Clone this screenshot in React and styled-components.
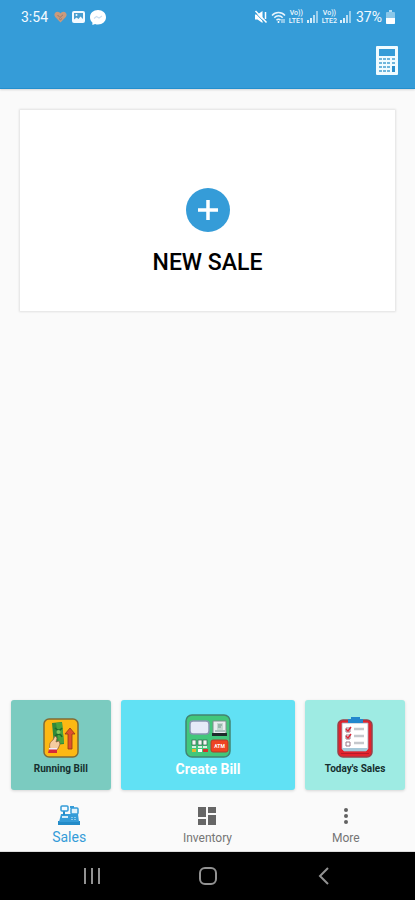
import React, { useState } from 'react';
import styled, { createGlobalStyle } from 'styled-components';

const GlobalStyle = createGlobalStyle`
  * {
    box-sizing: border-box;
  }

  body {
    margin: 0;
    background: #fafafa;
    font-family: Roboto, 'Liberation Sans', sans-serif;
  }

  button {
    font-family: inherit;
    border: 0;
    padding: 0;
    cursor: pointer;
  }

  svg {
    display: block;
    flex: none;
  }
`;

const HeartIcon = () => (
  <svg width="13" height="12" viewBox="0 0 13 12">
    <path d="M6.5 11.5 1.2 6C-.6 3.8.8.8 3.4.8c1.4 0 2.4.7 3.1 1.8C7.2 1.5 8.2.8 9.6.8c2.6 0 4 3 2.2 5.2Z" fill="#c99a7c" />
    <path d="M3.5 4 6 6.5 9 3.8M5 7.5l1.5 1.2L8 7.5" fill="none" stroke="#96796c" />
  </svg>
);

const PictureIcon = () => (
  <svg width="13" height="12" viewBox="0 0 13 12">
    <rect width="13" height="12" rx="2" fill="#f3faff" />
    <path d="M2 2h9v6L8.5 5.5 6.5 8 4.5 6.5 2 8.5Z" fill="#4b9fd0" />
    <circle cx="4.5" cy="4" r="1" fill="#f3faff" />
  </svg>
);

const ChatIcon = () => (
  <svg width="16" height="15" viewBox="0 0 16 15">
    <path d="M8 0c4.5 0 8 3 8 7.2s-3.5 7.2-8 7.2c-1 0-2-.1-2.9-.5L2.4 15v-2.6C.9 11.2 0 9.4 0 7.2 0 3 3.5 0 8 0Z" fill="#fff" />
    <path d="m4 8.5 2.5-2L9 8l3-2" fill="none" stroke="#c9def0" strokeWidth="1.2" />
  </svg>
);

const MuteIcon = () => (
  <svg width="14" height="14" viewBox="0 0 14 14">
    <path d="M1 4.5h2.5L8.500 1v12l-5-3.500H1Z" fill="#fff" />
    <path d="M1 2.500 11 13" stroke="#359cd8" />
    <path d="m1.500 1 11 11.500M11.500 2v7" stroke="#fff" strokeWidth="1.5" fill="none" />
  </svg>
);

const WifiIcon = () => (
  <svg width="15" height="13" viewBox="0 0 15 13" fill="none" stroke="#e8f5fd" strokeWidth="1.5">
    <path d="M1 4.5C4.5.6 10.5.6 14 4.5M3.3 6.8c2.4-2.6 6-2.6 8.4 0M5.5 9.2c1.2-1.3 2.8-1.3 4 0" />
    <circle cx="7.5" cy="11" r="1" fill="#fff" stroke="none" />
    <path d="M11 8v4M13 8v4" strokeWidth="1" />
  </svg>
);

const SignalIcon = () => (
  <svg width="12" height="12" viewBox="0 0 12 12" fill="#d9eefa">
    <rect x="0" y="9" width="2" height="3" />
    <rect x="3" y="7" width="2" height="5" />
    <rect x="6" y="4" width="2" height="8" opacity=".8" />
    <rect x="9" y="0" width="2" height="12" opacity=".6" />
  </svg>
);

const BatteryIcon = () => (
  <svg width="9" height="14" viewBox="0 0 9 14">
    <rect x="3" y="0" width="3" height="2" fill="#b5dcf3" />
    <rect x="0" y="2" width="9" height="12" rx="1" fill="#8ac7e9" />
    <path d="M0 8h9v5a1 1 0 0 1-1 1H1a1 1 0 0 1-1-1Z" fill="#fff" />
  </svg>
);

const CalculatorIcon = () => (
  <svg width="22" height="29" viewBox="0 0 22 29">
    <rect width="22" height="29" rx="1" fill="#f0fbff" />
    <rect x="3" y="3" width="16" height="7" fill="#359cd8" />
    {[12, 16, 20, 24].map((y) =>
      [3, 7, 11, 16].map((x) => (
        <rect key={`${x}-${y}`} x={x} y={y} width="3" height="2" fill="#6fb6dc" />
      ))
    )}
    <rect x="16" y="20" width="3" height="6" fill="#2b8fcb" />
  </svg>
);

const PlusIcon = () => (
  <svg width="44" height="44" viewBox="0 0 44 44">
    <circle cx="22" cy="22" r="22" fill="#359cd8" />
    <path d="M22 12v20M12 22h20" stroke="#fff" strokeWidth="3.5" />
  </svg>
);

const RunningBillIcon = () => (
  <svg width="36" height="40" viewBox="0 0 36 40">
    <rect x="1" y="1" width="34" height="38" rx="5" fill="#fdb813" stroke="#806b36" strokeWidth="1.5" />
    <path d="M9 5 19 4l2 22-10 1Z" fill="#31893b" />
    <path d="m13 5 6-.5L21 25l-5 .5Z" fill="#4aa33f" />
    <path d="M12 10c3 3 5 3 7 0M12 18c3-3 6-2 7 1" fill="none" stroke="#1d6b2d" strokeWidth="1.5" />
    <circle cx="15.5" cy="14" r="2" fill="#83c65c" />
    <path d="M7 31c-1-5 0-7 3-9l2-4 2 2-1 4 3-1 1 3-2 5-2 1Z" fill="#f5cba0" stroke="#8a5a3a" strokeWidth=".7" />
    <path d="M6 31h8v4H5Z" fill="#d6293a" />
    <path d="M6 30h8v1.5H6Z" fill="#eef" />
    <path d="M25 31V16h-3l5-6 5 6h-3v15Z" fill="#e2502b" stroke="#8d3b17" strokeWidth=".8" />
  </svg>
);

const CreateBillIcon = () => (
  <svg width="46" height="44" viewBox="0 0 46 44">
    <rect x="1" y="1" width="44" height="42" rx="6" fill="#42c77b" stroke="#428471" strokeWidth="1.5" />
    <rect x="5" y="7" width="19" height="13" rx="3" fill="#e6eaf8" stroke="#8795b0" strokeWidth="1.5" />
    <path d="M28 7h13v13H28Z" fill="#e9edf0" stroke="#7c8d8b" />
    <path d="M32 9h6v7h-6Z" fill="#c3d8d0" />
    <path d="M33 11h4M33 13h3M30 17h10" stroke="#6d9189" />
    <path d="M27 19h15v3H27Z" fill="#1e2c2b" />
    {[7, 13, 18].map((x) => (
      <g key={x}>
        <rect x={x} y="26" width="4" height="5" fill="#f4f7f4" stroke="#315f4b" strokeWidth=".7" />
        <rect x={x} y="32" width="4" height="2" fill="#dceee2" />
      </g>
    ))}
    <path d="M7 35h4v3H7Z" fill="#e5b82b" />
    <path d="M13 35h4v3h-4Z" fill="#fff" />
    <path d="M18 35h5v3h-5Z" fill="#d4342c" />
    <rect x="26" y="26" width="17" height="12" rx="2" fill="#ee4423" stroke="#af3d2a" />
    <text x="34.5" y="34" fontSize="5" fontWeight="700" fill="#fff" textAnchor="middle">ATM</text>
  </svg>
);

const TodaySalesIcon = () => (
  <svg width="36" height="41" viewBox="0 0 36 41">
    <rect x="1" y="3" width="34" height="37" rx="5" fill="#e3222d" stroke="#98414a" strokeWidth="1.5" />
    <path d="M4 36h28v1H4Z" fill="#b71928" />
    <path d="M5 6h26v26l-2 2H7l-2-2Z" fill="#fff" stroke="#9caab9" strokeWidth=".8" />
    <path d="M5 31h26l-2 3H7Z" fill="#a6c8d8" />
    <path d="M11 2h3V0h9v2h3v4H11Z" fill="#2387cd" />
    <path d="M9 11h4v4H9ZM9 18h4v4H9ZM9 25h4v4H9Z" fill="none" stroke="#997986" />
    <path d="m9 12 2 2 3-4M9 19l2 2 3-4" fill="none" stroke="#d82838" strokeWidth="1.5" />
    <path d="M17 12h10M17 19h10M17 26h10" stroke="#c5c8cc" strokeWidth="2.5" />
  </svg>
);

const SalesIcon = () => (
  <svg width="24" height="20" viewBox="0 0 24 20">
    <path d="M1 16h22v4H1Z" fill="#238bc8" />
    <path d="M4 9h17l1 8H2Z" fill="#359cd8" />
    <path d="M7 5v5" stroke="#238bc8" strokeWidth="2" />
    <rect x="4" y="1" width="7" height="5" rx="1" fill="#f3faff" stroke="#359cd8" strokeWidth="1.5" />
    <rect x="14" y="3" width="7" height="6" rx="1" fill="#e1f2fb" stroke="#359cd8" strokeWidth="1.5" />
    <path d="M13 1h4v2h-4Z" fill="#359cd8" />
    <path d="M5 11h6v2H5Z" fill="#d6edf9" />
    <path d="M14 12h2v1h-2ZM17 12h2v1h-2ZM14 14h2v1h-2ZM17 14h2v1h-2Z" fill="#8bc8e9" />
  </svg>
);

const InventoryIcon = () => (
  <svg width="20" height="20" viewBox="0 0 20 20" fill="#666">
    <path d="M1 1h8v10H1ZM11 1h8v6h-8ZM1 13h8v6H1ZM11 9h8v10h-8Z" />
  </svg>
);

const MoreIcon = () => (
  <svg width="20" height="20" viewBox="0 0 20 20" fill="#616161">
    <circle cx="10" cy="4" r="2" />
    <circle cx="10" cy="10" r="2" />
    <circle cx="10" cy="16" r="2" />
  </svg>
);

const tiles = [
  { label: 'Running Bill', icon: <RunningBillIcon />, color: '#7bcbc0' },
  { label: 'Create Bill', icon: <CreateBillIcon />, color: '#61e1f4', primary: true },
  { label: "Today's Sales", icon: <TodaySalesIcon />, color: '#9eebe3' },
];

const tabs = [
  { label: 'Sales', icon: <SalesIcon /> },
  { label: 'Inventory', icon: <InventoryIcon /> },
  { label: 'More', icon: <MoreIcon /> },
];

const App = () => {
  const [activeTab, setActiveTab] = useState('Sales');

  return (
    <Screen>
      <GlobalStyle />

      <Header>
        <StatusBar>
          <StatusGroup $gap={5}>
            <StatusText>3:54</StatusText>
            <HeartIcon />
            <PictureIcon />
            <ChatIcon />
          </StatusGroup>
          <StatusGroup $gap={3}>
            <MuteIcon />
            <WifiIcon />
            <Volte><span>Vo))</span><span>LTE1</span></Volte>
            <SignalIcon />
            <Volte><span>Vo))</span><span>LTE2</span></Volte>
            <SignalIcon />
            <StatusText>37%</StatusText>
            <BatteryIcon />
          </StatusGroup>
        </StatusBar>
        <Toolbar>
          <IconButton type="button" aria-label="Calculator">
            <CalculatorIcon />
          </IconButton>
        </Toolbar>
      </Header>

      <Content>
        <NewSaleCard type="button">
          <PlusIcon />
          NEW SALE
        </NewSaleCard>
      </Content>

      <Tiles>
        {tiles.map((tile) => (
          <Tile key={tile.label} type="button" $color={tile.color} $primary={tile.primary}>
            {tile.icon}
            <span>{tile.label}</span>
          </Tile>
        ))}
      </Tiles>

      <TabBar>
        {tabs.map((tab) => (
          <Tab
            key={tab.label}
            type="button"
            $active={tab.label === activeTab}
            onClick={() => setActiveTab(tab.label)}
          >
            {tab.icon}
            <span>{tab.label}</span>
          </Tab>
        ))}
      </TabBar>

      <SystemBar>
        <SystemButton type="button" aria-label="Recents">
          <svg width="18" height="18" viewBox="0 0 18 18">
            <path d="M2 1v16M9 1v16M16 1v16" />
          </svg>
        </SystemButton>
        <SystemButton type="button" aria-label="Home">
          <svg width="18" height="18" viewBox="0 0 18 18">
            <rect x="1" y="1" width="16" height="16" rx="5" />
          </svg>
        </SystemButton>
        <SystemButton type="button" aria-label="Back">
          <svg width="18" height="18" viewBox="0 0 18 18">
            <path d="M13 1 5 9l8 8" />
          </svg>
        </SystemButton>
      </SystemBar>
    </Screen>
  );
};

const Screen = styled.div`
  display: flex;
  flex-direction: column;
  min-height: 100vh;
  background: #fafafa;
`;

const Header = styled.header`
  background: #359cd8;
  border-bottom: 1px solid #238fce;
  box-shadow: 0 1px 2px rgba(0, 0, 0, 0.15);
`;

const StatusBar = styled.div`
  display: flex;
  align-items: center;
  justify-content: space-between;
  height: 32px;
  padding: 2px 20px 0;
`;

const StatusGroup = styled.div`
  display: flex;
  align-items: center;
  gap: ${(props) => props.$gap}px;
`;

const StatusText = styled.span`
  color: #f3faff;
  font-size: 14px;
  line-height: 16px;
  padding: 0 1px;
`;

const Volte = styled.span`
  display: flex;
  flex-direction: column;
  align-items: center;
  color: #eef8fe;
  font-size: 7px;
  font-weight: 500;
  line-height: 8px;
`;

const Toolbar = styled.div`
  display: flex;
  align-items: center;
  justify-content: flex-end;
  height: 56px;
  padding: 0 17px;
`;

const IconButton = styled.button`
  background: none;
`;

const Content = styled.main`
  flex: 1;
  padding: 21px 20px;
`;

const NewSaleCard = styled.button`
  display: flex;
  flex-direction: column;
  align-items: center;
  justify-content: center;
  gap: 17px;
  width: 100%;
  height: 201px;
  padding-top: 44px;
  background: #fff;
  color: #000;
  font-size: 23px;
  font-weight: 500;
  line-height: 28px;
  box-shadow: 0 0 2px 1px rgba(0, 0, 0, 0.1);
`;

const Tiles = styled.div`
  display: grid;
  grid-template-columns: 4fr 7fr 4fr;
  gap: 10px;
  padding: 0 10px 0 11px;
`;

const Tile = styled.button`
  display: flex;
  flex-direction: column;
  align-items: center;
  justify-content: flex-end;
  gap: ${(props) => (props.$primary ? 2 : 3)}px;
  height: 90px;
  padding-bottom: ${(props) => (props.$primary ? 12 : 13)}px;
  border-radius: 3px;
  background: ${(props) => props.$color};
  color: ${(props) => (props.$primary ? '#fff' : '#16302f')};
  font-size: ${(props) => (props.$primary ? 14 : 10)}px;
  font-weight: 700;
  line-height: ${(props) => (props.$primary ? 18 : 16)}px;
  box-shadow: 0 1px 3px rgba(0, 0, 0, 0.15);
`;

const TabBar = styled.nav`
  display: grid;
  grid-template-columns: repeat(3, 1fr);
  height: 62px;
  border-bottom: 1px solid #ddd;
`;

const Tab = styled.button`
  display: flex;
  flex-direction: column;
  align-items: center;
  justify-content: flex-end;
  gap: 4px;
  padding-bottom: ${(props) => (props.$active ? 6 : 5)}px;
  background: none;
  color: ${(props) => (props.$active ? '#359cd8' : '#757575')};
  font-size: ${(props) => (props.$active ? 14 : 12)}px;
  line-height: 16px;
`;

const SystemBar = styled.div`
  display: flex;
  justify-content: center;
  gap: 98px;
  height: 48px;
  background: #000;
`;

const SystemButton = styled.button`
  background: none;

  svg {
    fill: none;
    stroke: #929292;
    stroke-width: 2;
  }
`;

export default App;
